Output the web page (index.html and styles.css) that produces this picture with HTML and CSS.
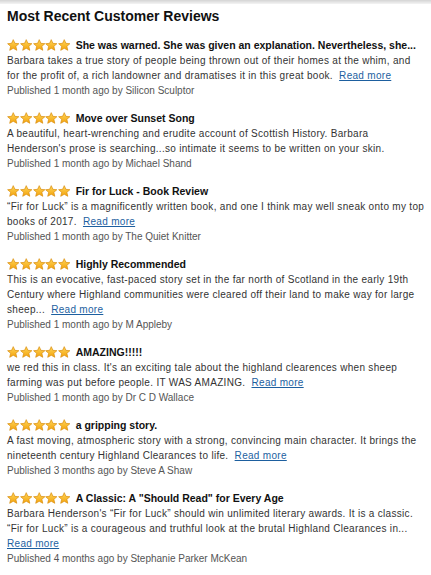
FILE: index.html
```html
<!DOCTYPE html>
<html>
<head>
<meta charset="utf-8">
<link rel="stylesheet" href="styles.css">
</head>
<body>
<svg width="0" height="0" class="defs">
  <defs>
    <linearGradient id="g" x1="0" y1="0" x2="0" y2="1">
      <stop offset="0" stop-color="#ffd65a"/>
      <stop offset="1" stop-color="#f3a30c"/>
    </linearGradient>
    <symbol id="star" viewBox="0 0 24 24">
      <path d="M12 1.2l3.2 7.1 7.6.7-5.8 5.1 1.8 7.6L12 17.8l-6.8 3.9 1.8-7.6-5.8-5.1 7.6-.7z" fill="url(#g)" stroke="#d98a08" stroke-width="1.3" stroke-linejoin="round"/>
    </symbol>
  </defs>
</svg>
<div class="topbar"></div>
<main class="reviews">
  <h2 class="heading">Most Recent Customer Reviews</h2>

  <div class="review">
    <div class="head"><span class="stars"><svg><use href="#star"/></svg><svg><use href="#star"/></svg><svg><use href="#star"/></svg><svg><use href="#star"/></svg><svg><use href="#star"/></svg></span><span class="title">She was warned. She was given an explanation. Nevertheless, she...</span></div>
    <p class="body">Barbara takes a true story of people being thrown out of their homes at the whim, and for the profit of, a rich landowner and dramatises it in this great book.&nbsp; <a href="#" class="more">Read more</a></p>
    <p class="meta">Published 1 month ago by Silicon Sculptor</p>
  </div>

  <div class="review">
    <div class="head"><span class="stars"><svg><use href="#star"/></svg><svg><use href="#star"/></svg><svg><use href="#star"/></svg><svg><use href="#star"/></svg><svg><use href="#star"/></svg></span><span class="title">Move over Sunset Song</span></div>
    <p class="body">A beautiful, heart-wrenching and erudite account of Scottish History. Barbara Henderson's prose is searching...so intimate it seems to be written on your skin.</p>
    <p class="meta">Published 1 month ago by Michael Shand</p>
  </div>

  <div class="review">
    <div class="head"><span class="stars"><svg><use href="#star"/></svg><svg><use href="#star"/></svg><svg><use href="#star"/></svg><svg><use href="#star"/></svg><svg><use href="#star"/></svg></span><span class="title">Fir for Luck - Book Review</span></div>
    <p class="body">“Fir for Luck” is a magnificently written book, and one I think may well sneak onto my top books of 2017.&nbsp; <a href="#" class="more">Read more</a></p>
    <p class="meta">Published 1 month ago by The Quiet Knitter</p>
  </div>

  <div class="review">
    <div class="head"><span class="stars"><svg><use href="#star"/></svg><svg><use href="#star"/></svg><svg><use href="#star"/></svg><svg><use href="#star"/></svg><svg><use href="#star"/></svg></span><span class="title">Highly Recommended</span></div>
    <p class="body">This is an evocative, fast-paced story set in the far north of Scotland in the early 19th Century where Highland communities were cleared off their land to make way for large sheep...&nbsp; <a href="#" class="more">Read more</a></p>
    <p class="meta">Published 1 month ago by M Appleby</p>
  </div>

  <div class="review">
    <div class="head"><span class="stars"><svg><use href="#star"/></svg><svg><use href="#star"/></svg><svg><use href="#star"/></svg><svg><use href="#star"/></svg><svg><use href="#star"/></svg></span><span class="title">AMAZING!!!!!</span></div>
    <p class="body">we red this in class. It's an exciting tale about the highland clearences when sheep farming was put before people. IT WAS AMAZING.&nbsp; <a href="#" class="more">Read more</a></p>
    <p class="meta">Published 1 month ago by Dr C D Wallace</p>
  </div>

  <div class="review">
    <div class="head"><span class="stars"><svg><use href="#star"/></svg><svg><use href="#star"/></svg><svg><use href="#star"/></svg><svg><use href="#star"/></svg><svg><use href="#star"/></svg></span><span class="title">a gripping story.</span></div>
    <p class="body">A fast moving, atmospheric story with a strong, convincing main character. It brings the nineteenth century Highland Clearances to life.&nbsp; <a href="#" class="more">Read more</a></p>
    <p class="meta">Published 3 months ago by Steve A Shaw</p>
  </div>

  <div class="review">
    <div class="head"><span class="stars"><svg><use href="#star"/></svg><svg><use href="#star"/></svg><svg><use href="#star"/></svg><svg><use href="#star"/></svg><svg><use href="#star"/></svg></span><span class="title">A Classic: A "Should Read" for Every Age</span></div>
    <p class="body">Barbara Henderson's “Fir for Luck” should win unlimited literary awards. It is a classic. “Fir for Luck” is a courageous and truthful look at the brutal Highland Clearances in...&nbsp; <a href="#" class="more">Read more</a></p>
    <p class="meta">Published 4 months ago by Stephanie Parker McKean</p>
  </div>
</main>
</body>
</html>
```

FILE: styles.css
```css
html, body {
  margin: 0;
  padding: 0;
  background: #fff;
}
body {
  font-family: "Liberation Sans", Arial, sans-serif;
  color: #222;
}
.defs {
  position: absolute;
  width: 0;
  height: 0;
}
.topbar {
  height: 4px;
  background: linear-gradient(#d4d4d4, #f4f4f4);
}
.reviews {
  padding: 0 6px 0 7px;
}
.heading {
  margin: 0 0 12px;
  padding-top: 4px;
  font-size: 14px;
  line-height: 17px;
  font-weight: bold;
  color: #111;
}
.review {
  margin-bottom: 12px;
}
.head {
  display: flex;
  align-items: center;
  height: 16px;
}
.stars {
  display: flex;
  gap: 0.3px;
  margin-right: 5px;
}
.stars svg {
  width: 12.5px;
  height: 12.5px;
}
.title {
  font-size: 10.5px;
  font-weight: bold;
  color: #111;
  white-space: nowrap;
}
.body {
  margin: 0;
  font-size: 10px;
  line-height: 15px;
  letter-spacing: 0.3px;
  color: #333;
}
.more {
  color: #1d5f9f;
  text-decoration: underline;
}
.meta {
  margin: 0;
  font-size: 10px;
  line-height: 15px;
  color: #555;
}
```
